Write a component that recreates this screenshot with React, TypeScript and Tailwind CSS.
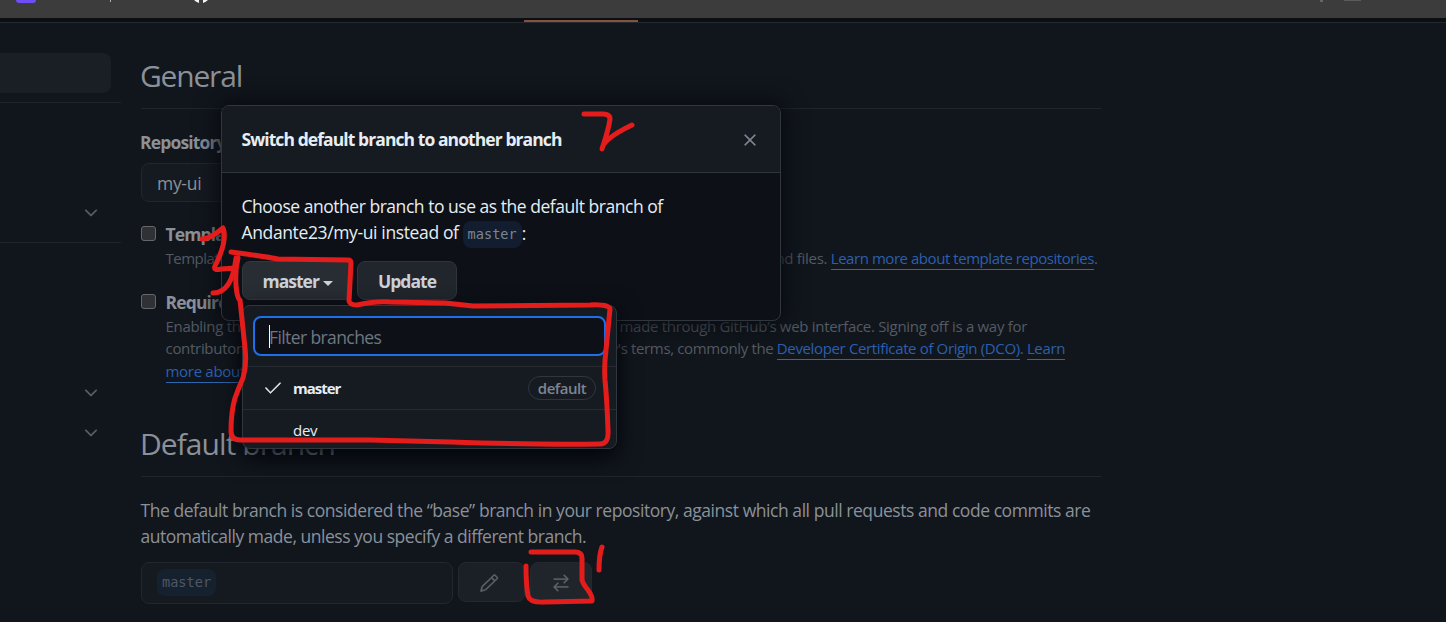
import type { ReactNode } from 'react'
import { GoArrowSwitch, GoCheck, GoChevronDown, GoPencil, GoX } from 'react-icons/go'

type Branch = { name: string; isDefault: boolean }

const BRANCHES: Branch[] = [
  { name: 'master', isDefault: true },
  { name: 'dev', isDefault: false },
]

// Freehand marker strokes drawn over the page
const MARKS = [
  'M584 114 L603 114 Q610 114 610 119 Q609 128 602 149 Q603 139 632 125',
  'M202 239 Q210 239 223 228 Q228 240 215 266 Q213 271 221 269 L235 268 M213 293 Q232 293 236 258',
  'M231 252 Q262 256 278 259 L348 260 Q351 260 351 263 Q350 281 349 301 Q350 305 357 305 Q376 301 390 302 L445 303 L473 306 L590 305 Q609 304 610 309 Q609 320 606 350 Q604 366 605 380 Q607 400 608 430 Q609 444 600 444 Q540 445 450 442 Q410 441 370 440 L240 440 Q231 440 231 431 Q231 412 235 398 Q239 387 243 378 Q247 365 245 348 Q242 320 240 300 Q237 299 236 285 Q235 270 238 258',
  'M531 552 L575 552 Q582 552 582 558 L582 580 Q583 584 588 590 Q593 597 592 601 L545 602 Q530 603 528 596 Q526 584 526 566',
  'M602 547 Q599 555 599 570',
]

function Link({ children }: { children: ReactNode }) {
  return <a className="border-b border-[#2c66ae] pb-px text-[#2c5fae]">{children}</a>
}

function BranchName({ muted = false }: { muted?: boolean }) {
  return (
    <code
      className={`block h-[27px] rounded-lg px-[5px] font-['DejaVu_Sans_Mono',monospace] text-[13.6px] leading-[27px] tracking-normal ${
        muted ? 'bg-[#162130] text-[#4f5761]' : 'bg-[#121d2f] text-[#7d8590]'
      }`}
    >
      master
    </code>
  )
}

function Setting({ title, className, children }: { title: string; className: string; children: ReactNode }) {
  return (
    <div className={`flex ${className}`}>
      <span className="mt-[5px] size-[15px] shrink-0 rounded-[3px] border border-[#66676a] bg-[#303135]" />
      <div className="ml-[9.5px] whitespace-nowrap">
        <div className="text-[17.5px] font-bold leading-[26px] tracking-[-0.85px] text-[#8b9199]">{title}</div>
        <div className="text-[15px] leading-[22.5px] tracking-[-0.3px] text-[#545a62]">{children}</div>
      </div>
    </div>
  )
}

function BrowserBar() {
  return (
    <div className="flex h-[18px] shrink-0 items-start bg-[#3c3c3c]">
      <span className="ml-4 h-[3px] w-5 rounded-b-sm bg-[#6e4ff6]" />
      <span className="ml-[74px] h-[2px] w-px bg-[#b0b0b0]" />
      <svg className="ml-[83px] h-[3px] w-[14px]" viewBox="0 0 14 3">
        <path d="M0 0h5v3Q2 2 0 0M9 0h5Q12 2 9 3z" fill="#f4f4f4" />
      </svg>
      <span className="ml-[1112px] h-[2px] w-[3px] bg-[#666]" />
      <span className="ml-[21px] h-px w-[17px] bg-[#5c5c5c]" />
    </div>
  )
}

function SidebarChevron({ className }: { className: string }) {
  return <GoChevronDown className={`ml-[81px] size-5 text-[#5d636c] ${className}`} stroke="currentColor" strokeWidth={0.5} />
}

function Sidebar() {
  return (
    <aside className="flex w-[121px] shrink-0 flex-col">
      <div className="mt-[30px] h-10 w-[111px] rounded-r-lg bg-[#1a1e25]" />
      <div className="mt-[9px] h-px bg-[#20252c]" />
      <SidebarChevron className="mt-[100px]" />
      <div className="mt-[19px] h-px bg-[#20252c]" />
      <SidebarChevron className="mt-[140px]" />
      <SidebarChevron className="mt-5" />
    </aside>
  )
}

function BranchMenu() {
  return (
    <div className="absolute left-[242px] top-[305px] flex h-[144px] w-[375px] flex-col overflow-hidden rounded-lg border border-[#30363d] bg-[#161b22] shadow-[0_8px_24px_#010409]">
      <div className="ml-[10px] mt-[10px] flex h-10 w-[353px] shrink-0 items-center rounded-lg border-2 border-[#1f6feb] bg-[#0d1117] pl-[14px]">
        <span className="h-[23px] w-px bg-white" />
        <span className="-ml-px pt-[2px] text-[17.5px] leading-[26px] tracking-[-0.6px] text-[#6e7681]">Filter branches</span>
      </div>
      <div className="mt-[10px] shrink-0">
        {BRANCHES.map((b) => (
          <div key={b.name} className="flex h-[43px] items-center border-t border-[#262b32] pl-5 pr-5 text-[15px] leading-[22px] text-[#e6edf3]">
            <span className="w-[30px]">
              {b.isDefault && <GoCheck className="size-5" stroke="currentColor" strokeWidth={0.3} />}
            </span>
            <span className={b.isDefault ? 'font-bold tracking-[-1px]' : 'pb-[2px] font-medium tracking-[-0.3px]'}>{b.name}</span>
            {b.isDefault && (
              <span className="ml-auto flex h-6 w-[68px] items-center justify-center rounded-full border border-[#30363d] font-semibold tracking-[-0.5px] text-[#7d8590]">
                default
              </span>
            )}
          </div>
        ))}
      </div>
    </div>
  )
}

function SwitchBranchDialog() {
  return (
    <div className="absolute left-[221px] top-[105px] flex h-[216px] w-[560px] flex-col overflow-hidden rounded-lg border border-[#30363d] bg-[#0d1117] text-[17.5px] leading-[26px] text-[#e6edf3] shadow-[0_0_22px_4px_#080b10]">
      <div className="flex h-[67px] shrink-0 items-center justify-between border-b border-[#30363d] bg-[#161b22] pl-[19.5px] pr-5 pt-px">
        <h2 className="whitespace-nowrap pb-[2px] font-bold tracking-[-0.92px]">Switch default branch to another branch</h2>
        <GoX className="size-5 text-[#7d8590]" stroke="currentColor" strokeWidth={0.6} />
      </div>
      <div className="whitespace-nowrap pl-[19.5px] pt-5">
        <p className="h-[26px] tracking-[-0.47px]">Choose another branch to use as the default branch of</p>
        <p className="flex h-[27px] items-center tracking-[-0.37px]">
          <span className="pb-px">Andante23/my-ui instead of</span>
          <span className="ml-1 pt-[3px]"><BranchName /></span>:
        </p>
        <div className="mt-[15px] flex gap-[5px] font-bold tracking-[-1px] text-[#c9d1d9]">
          <button className="flex h-[39px] w-[110px] items-center rounded-lg border border-[#33383f] bg-[#282c33] pl-[20px] pt-px">
            master
            <span className="ml-[4px] mt-1 border-x-[5px] border-t-[5px] border-x-transparent border-t-[#c9d1d9]" />
          </button>
          <button className="h-[39px] w-[100px] rounded-lg border border-[#30353c] bg-[#21262d] pl-px pt-px tracking-[-0.95px]">Update</button>
        </div>
      </div>
    </div>
  )
}

export default function App() {
  return (
    <div className="relative flex h-[622px] w-[1446px] flex-col overflow-hidden bg-[#11161d] font-['Open_Sans','Noto_Sans',sans-serif]">
      <BrowserBar />
      <div className="flex h-[5px] shrink-0 items-end border-b border-[#242930] bg-[#0b0e13] pl-[524px]">
        <span className="h-[2px] w-[114px] bg-[#85503f]" />
      </div>

      <div className="flex">
        <Sidebar />
        <main className="ml-5 flex w-[960px] flex-col whitespace-nowrap">
          <h1 className="mt-[30px] h-14 border-b border-[#20252c] text-[30px] leading-[45px] text-[#8b9199]">
            <span className="-ml-px tracking-[-1.2px]">General</span>
          </h1>

          <label className="mt-5 text-[17.5px] font-bold leading-[26px] tracking-[-0.85px] text-[#8b9199]">
            <span className="-ml-px">Repository name</span>
          </label>
          <div className="mt-2 h-[39px] w-[312px] rounded-lg border border-[#22272e] bg-[#151a21] pl-[15px] text-[17.5px] leading-[39px] tracking-[-0.3px] text-[#8b9199]">my-ui</div>

          <Setting title="Template repository" className="mt-[19px]">
            <div className="flex w-[932px]">
              <span className="min-w-0 flex-1 tracking-[-0.5px]">Template repositories let users generate new repositories with the same directory structure a</span>
              <span>nd files. <span className="tracking-[-0.45px]"><Link>Learn more about template repositories</Link>.</span></span>
            </div>
          </Setting>
          <Setting title="Require contributors to sign off on web-based commits" className="mt-[19px]">
            <div className="flex w-[861.5px]">
              <span className="min-w-0 flex-1">Enabling this setting will require contributors to sign off on</span>
              <span className="shrink-0">made through GitHub’s web interface. Signing off is a way for</span>
            </div>
            <div className="flex w-[899.5px]">
              <span className="min-w-0 flex-1">contributors to affirm that their commit complies with the</span>
              <span className="shrink-0 tracking-[-0.36px]">repository's terms, commonly the <Link>Developer Certificate of Origin (DCO)</Link>. <Link>Learn</Link></span>
            </div>
            <div><Link>more about signing off on commits</Link>.</div>
          </Setting>

          <h2 className="mt-[39px] h-14 border-b border-[#20252c] text-[30px] leading-[45px] text-[#8b9199]">
            <span className="-ml-px tracking-[-0.95px]">Default branch</span>
          </h2>
          <p className="-ml-[0.5px] mt-5 text-[17.5px] leading-[26.25px] tracking-[-0.445px] text-[#8b9199]">
            The default branch is considered the “base” branch in your repository, against which all pull requests and code commits are
            <br />
            <span className="tracking-[-0.48px]">automatically made, unless you specify a different branch.</span>
          </p>
          <div className="mt-[12px] flex gap-[5px] text-[#5d636c]">
            <div className="flex h-[42px] w-[312px] items-center rounded-lg border border-[#22272e] bg-[#151a21] pl-[15px]">
              <BranchName muted />
            </div>
            <button className="flex h-10 w-[67px] items-center justify-center rounded-lg border border-[#24292f] bg-[#1b2027]">
              <GoPencil className="-ml-[5px] mt-[2px] size-5" stroke="currentColor" strokeWidth={0.4} />
            </button>
            <button className="flex h-10 w-[62px] items-center justify-center rounded-lg border border-[#24292f] bg-[#20252b]">
              <GoArrowSwitch className="mt-[2px] size-5" stroke="currentColor" strokeWidth={0.4} />
            </button>
          </div>
        </main>
      </div>

      <SwitchBranchDialog />
      <BranchMenu />

      <svg className="pointer-events-none absolute inset-0" width="1446" height="622" fill="none" stroke="#e51c1c" strokeWidth="5" strokeLinecap="round" strokeLinejoin="round">
        {MARKS.map((d) => (
          <path key={d} d={d} />
        ))}
      </svg>
    </div>
  )
}
